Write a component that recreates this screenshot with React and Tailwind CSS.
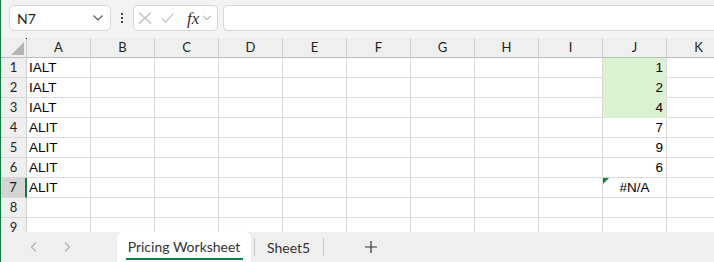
import React from 'react'

const cols = ['A', 'B', 'C', 'D', 'E', 'F', 'G', 'H', 'I', 'J', 'K']

const rows = [
  { n: 1, a: 'IALT', j: '1', green: true },
  { n: 2, a: 'IALT', j: '2', green: true },
  { n: 3, a: 'IALT', j: '4', green: true },
  { n: 4, a: 'ALIT', j: '7' },
  { n: 5, a: 'ALIT', j: '9' },
  { n: 6, a: 'ALIT', j: '6' },
  { n: 7, a: 'ALIT', j: '#N/A', error: true },
  { n: 8 },
  { n: 9 },
]

const ui = { fontFamily: 'Lato, "Liberation Sans", sans-serif' }
const cellFont = { fontFamily: '"Liberation Sans", Arial, sans-serif' }

function Chevron({ className }) {
  return (
    <svg className={className} width="10" height="6" viewBox="0 0 10 6" fill="none" stroke="currentColor" strokeWidth="1.1">
      <path d="M0.5 0.5 L5 5 L9.5 0.5" />
    </svg>
  )
}

function Toolbar() {
  return (
    <div className="h-[38px] flex items-start pt-[5px] bg-[#f3f3f3]">
      {/* name box */}
      <div className="ml-[8px] w-[102px] h-[26px] bg-white border border-[#d6d6d6] rounded-[5px] flex items-center justify-between pl-[7px] pr-[7px]">
        <span className="text-[14px] text-[#1f1f1f]" style={ui}>N7</span>
        <Chevron className="text-[#555]" />
      </div>
      {/* dots */}
      <div className="w-[22px] h-[26px] flex flex-col items-center justify-center gap-[2px]">
        <span className="w-[2px] h-[2px] bg-[#444]" />
        <span className="w-[2px] h-[2px] bg-[#444]" />
        <span className="w-[2px] h-[2px] bg-[#444]" />
      </div>
      {/* fx box */}
      <div className="w-[85px] h-[26px] bg-white border border-[#d6d6d6] rounded-[5px] flex items-center pl-[4px]">
        <svg width="14" height="12" viewBox="0 0 14 12" fill="none" stroke="#b8b8b8" strokeWidth="1.1">
          <path d="M1 0.5 L13 11.5 M13 0.5 L1 11.5" />
        </svg>
        <svg className="ml-[9px]" width="13" height="10" viewBox="0 0 13 10" fill="none" stroke="#b8b8b8" strokeWidth="1.1">
          <path d="M0.5 5 L4.5 9.3 L12.5 0.5" />
        </svg>
        <span className="ml-[13px] text-[17px] italic text-[#333] leading-none" style={{ fontFamily: '"Liberation Serif", serif' }}>fx</span>
        <Chevron className="ml-[4px] w-[8px] text-[#777]" />
      </div>
      {/* formula bar */}
      <div className="ml-[5px] flex-1 h-[26px] bg-white border border-r-0 border-[#d6d6d6] rounded-l-[5px]" />
    </div>
  )
}

function Grid() {
  return (
    <div className="h-[194px] overflow-hidden bg-white">
      {/* header row */}
      <div className="flex h-[20px] bg-[#efefef] border-b border-[#bdbdbd]">
        <div className="relative w-[26px] shrink-0 border-r border-[#d2d2d2]">
          <svg className="absolute left-[10px] top-[4px]" width="13" height="13" viewBox="0 0 13 13">
            <path d="M13 0 L13 13 L0 13 Z" fill="#b4b4b4" />
          </svg>
          <span className="absolute right-[-1px] top-0 w-[1px] h-[1px] bg-black" />
        </div>
        {cols.map((c) => (
          <div
            key={c}
            className="w-[64px] shrink-0 border-r border-[#d2d2d2] flex items-center justify-center text-[13px] text-[#1f1f1f]"
            style={ui}
          >
            {c}
          </div>
        ))}
      </div>
      {rows.map((r) => (
        <div key={r.n} className="flex h-[20px]">
          <div
            className={`w-[26px] shrink-0 flex items-center justify-center text-[13px] border-b border-[#d8d8d8] ${
              r.n === 7
                ? 'bg-[#d4d4d4] border-r-2 border-r-[#107c41] text-[#1f1f1f]'
                : 'bg-[#efefef] border-r border-r-[#d2d2d2] text-[#1f1f1f]'
            }`}
            style={ui}
          >
            {r.n}
          </div>
          {cols.map((c) => {
            const isJ = c === 'J'
            const green = isJ && r.green
            return (
              <div
                key={c}
                className={`relative w-[64px] shrink-0 border-r border-[#dadada] flex items-center pt-[1px] text-[13.5px] text-black ${
                  green ? 'bg-[#daf2d0] border-b border-b-[#daf2d0]' : 'border-b border-b-[#dadada]'
                } ${r.n === 3 && isJ ? 'border-b-[#dadada]' : ''} ${
                  isJ ? (r.error ? 'justify-center' : 'justify-end pr-[3px]') : 'pl-[2px]'
                }`}
                style={cellFont}
              >
                {r.error && isJ && (
                  <svg className="absolute left-0 top-0" width="6" height="6" viewBox="0 0 6 6">
                    <path d="M0 0 L6 0 L0 6 Z" fill="#107c41" />
                  </svg>
                )}
                {c === 'A' ? r.a : isJ ? r.j : null}
              </div>
            )
          })}
        </div>
      ))}
    </div>
  )
}

function Tabs() {
  return (
    <div className="h-[30px] flex items-stretch bg-[#efefef]" style={ui}>
      <div className="w-[116px] flex items-center text-[#b0b0b0]">
        <svg className="ml-[29px]" width="7" height="10" viewBox="0 0 7 10" fill="none" stroke="currentColor" strokeWidth="1.2">
          <path d="M6 0.5 L1.5 5 L6 9.5" />
        </svg>
        <svg className="ml-[27px]" width="7" height="10" viewBox="0 0 7 10" fill="none" stroke="currentColor" strokeWidth="1.2">
          <path d="M1 0.5 L5.5 5 L1 9.5" />
        </svg>
      </div>
      <div className="w-[134px] bg-white rounded-t-[5px] flex flex-col items-center justify-center pt-[3px] shadow-[0_0_1px_rgba(0,0,0,0.15)]">
        <span className="text-[14px] text-[#333] leading-[18px]">Pricing Worksheet</span>
        <span className="mt-[2px] w-[117px] h-[2px] bg-[#107c41]" />
      </div>
      <div className="flex items-center">
        <span className="ml-[3px] w-[1px] h-[18px] bg-[#c8c8c8]" />
        <span className="ml-[12px] text-[14px] text-[#333]">Sheet5</span>
        <span className="ml-[13px] w-[1px] h-[18px] bg-[#c8c8c8]" />
        <svg className="ml-[41px]" width="12" height="12" viewBox="0 0 12 12" fill="none" stroke="#333" strokeWidth="1.2">
          <path d="M6 0 L6 12 M0 6 L12 6" />
        </svg>
      </div>
    </div>
  )
}

export default function App() {
  return (
    <div className="w-[714px] h-[262px] overflow-hidden border-l border-[#107c41] bg-[#f3f3f3]">
      <Toolbar />
      <Grid />
      <Tabs />
    </div>
  )
}
